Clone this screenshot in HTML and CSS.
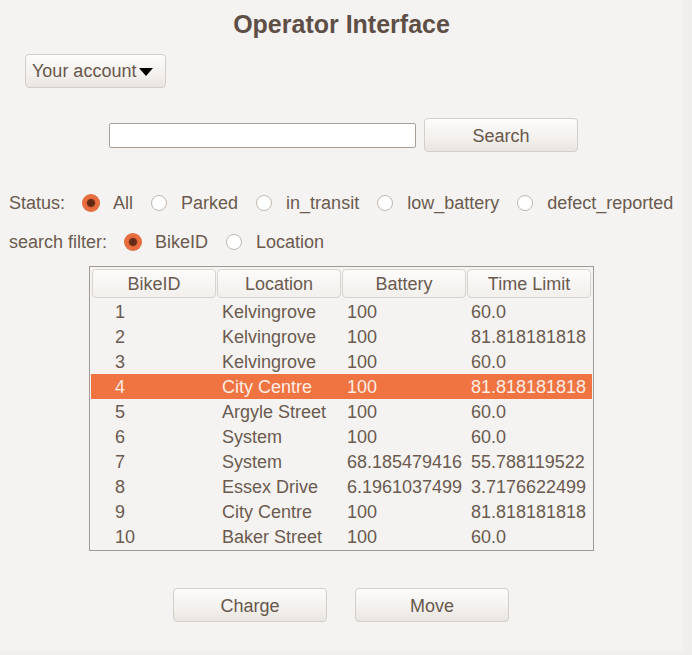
FILE: index.html
```html
<!DOCTYPE html>
<html>
<head>
<meta charset="utf-8">
<title>Operator Interface</title>
<link rel="stylesheet" href="styles.css">
</head>
<body>
<main class="page">
  <h1 class="title">Operator Interface</h1>
  <div class="account-row">
    <button class="btn account-btn">Your account<span class="caret"></span></button>
  </div>
  <div class="search-row">
    <input class="search-input" type="text">
    <button class="btn search-btn">Search</button>
  </div>
  <div class="radio-row">
    <span class="row-label">Status:</span>
    <span class="radio checked"></span><span class="opt">All</span>
    <span class="radio"></span><span class="opt">Parked</span>
    <span class="radio"></span><span class="opt">in_transit</span>
    <span class="radio"></span><span class="opt">low_battery</span>
    <span class="radio"></span><span class="opt">defect_reported</span>
  </div>
  <div class="radio-row filter-row">
    <span class="row-label">search filter:</span>
    <span class="radio checked"></span><span class="opt">BikeID</span>
    <span class="radio"></span><span class="opt">Location</span>
  </div>
  <div class="table-wrap">
    <div class="table">
      <div class="thead">
        <div class="th">BikeID</div>
        <div class="th">Location</div>
        <div class="th">Battery</div>
        <div class="th">Time Limit</div>
      </div>
      <div class="tr"><span class="c1">1</span><span>Kelvingrove</span><span>100</span><span>60.0</span></div>
      <div class="tr"><span class="c1">2</span><span>Kelvingrove</span><span>100</span><span>81.818181818</span></div>
      <div class="tr"><span class="c1">3</span><span>Kelvingrove</span><span>100</span><span>60.0</span></div>
      <div class="tr selected"><span class="c1">4</span><span>City Centre</span><span>100</span><span>81.818181818</span></div>
      <div class="tr"><span class="c1">5</span><span>Argyle Street</span><span>100</span><span>60.0</span></div>
      <div class="tr"><span class="c1">6</span><span>System</span><span>100</span><span>60.0</span></div>
      <div class="tr"><span class="c1">7</span><span>System</span><span>68.185479416</span><span>55.788119522</span></div>
      <div class="tr"><span class="c1">8</span><span>Essex Drive</span><span>6.1961037499</span><span>3.7176622499</span></div>
      <div class="tr"><span class="c1">9</span><span>City Centre</span><span>100</span><span>81.818181818</span></div>
      <div class="tr"><span class="c1">10</span><span>Baker Street</span><span>100</span><span>60.0</span></div>
    </div>
  </div>
  <div class="action-row">
    <button class="btn action-btn">Charge</button>
    <button class="btn action-btn">Move</button>
  </div>
</main>
</body>
</html>
```
FILE: styles.css
```css
html, body {
  margin: 0;
  padding: 0;
}
body {
  background: #efeeed;
  font-family: "Liberation Sans", Arial, sans-serif;
  color: #6a5a4f;
  width: 692px;
  height: 655px;
  overflow: hidden;
}
.page {
  width: 683px;
  height: 651px;
  background: #f5f3f1;
  padding-top: 8px;
  box-sizing: border-box;
}
.title {
  margin: 0;
  font-size: 25px;
  line-height: 30px;
  height: 30px;
  padding-top: 1px;
  box-sizing: border-box;
  font-weight: bold;
  text-align: center;
  color: #5e4f46;
}
.btn {
  font-family: "Liberation Sans", Arial, sans-serif;
  font-size: 18px;
  color: #67574b;
  background: linear-gradient(#fdfcfb, #f3f0ed 60%, #e9e5e1);
  border: 1px solid #d5cec8;
  border-radius: 4px;
  height: 34px;
  padding: 2px 0 0 0;
  box-sizing: border-box;
}
.account-row {
  margin-top: 16px;
  padding-left: 25px;
  height: 34px;
}
.account-btn {
  width: 141px;
  display: flex;
  align-items: center;
  padding: 1px 0 0 6px;
}
.caret {
  display: inline-block;
  width: 0;
  height: 0;
  border-left: 7px solid transparent;
  border-right: 7px solid transparent;
  border-top: 8px solid #000;
  margin-left: 3px;
  margin-top: 0;
}
.search-row {
  margin-top: 30px;
  height: 34px;
  display: flex;
  align-items: center;
  padding-left: 109px;
  gap: 8px;
}
.search-input {
  width: 307px;
  height: 25px;
  box-sizing: border-box;
  border: 1px solid #a99f97;
  border-radius: 2px;
  background: #fff;
  margin: 1px 0 0 0;
  padding: 0;
}
.search-btn {
  width: 154px;
}
.radio-row {
  margin-top: 35px;
  height: 30px;
  display: flex;
  align-items: center;
  padding: 2px 0 0 9px;
  box-sizing: border-box;
  font-size: 18px;
}
.filter-row {
  margin-top: 9px;
}
.radio {
  width: 16px;
  height: 16px;
  box-sizing: border-box;
  border-radius: 50%;
  border: 1px solid #bfb8b1;
  background: #fff;
  margin: 0 14px 0 18px;
  flex: none;
}
.radio.checked {
  width: 18px;
  height: 18px;
  margin: 0 13px 0 17px;
  border: none;
  background: radial-gradient(circle, #5b2816 0, #6a2d17 3.5px, #e6683a 4.7px, #ec6f40 7.3px, #d9673d 9px);
}
.table-wrap {
  margin-top: 10px;
  display: flex;
  justify-content: center;
}
.table {
  width: 505px;
  height: 285px;
  box-sizing: border-box;
  border: 1px solid #a39a93;
  background: #f5f3f1;
  padding: 2px 0 0 0;
  font-size: 18px;
}
.thead {
  display: grid;
  grid-template-columns: repeat(4, 124px);
  gap: 1px;
  padding: 0 2px;
  height: 29px;
  margin-bottom: 1px;
}
.th {
  border: 1px solid #d9d3cd;
  border-radius: 4px;
  background: linear-gradient(#fdfcfb, #f2efec);
  display: flex;
  align-items: center;
  justify-content: center;
  padding-top: 2px;
  box-sizing: border-box;
}
.tr {
  display: grid;
  grid-template-columns: 125px 125px 124px 127px;
  height: 25px;
  line-height: 27px;
  margin: 0 1px;
  white-space: nowrap;
}
.tr span {
  padding-left: 6px;
}
.tr span.c1 {
  padding-left: 24px;
}
.tr.selected {
  background: #ef7442;
  color: #fdece4;
}
.action-row {
  margin-top: 37px;
  display: flex;
  padding-left: 173px;
  gap: 28px;
}
.action-btn {
  width: 154px;
}
```
